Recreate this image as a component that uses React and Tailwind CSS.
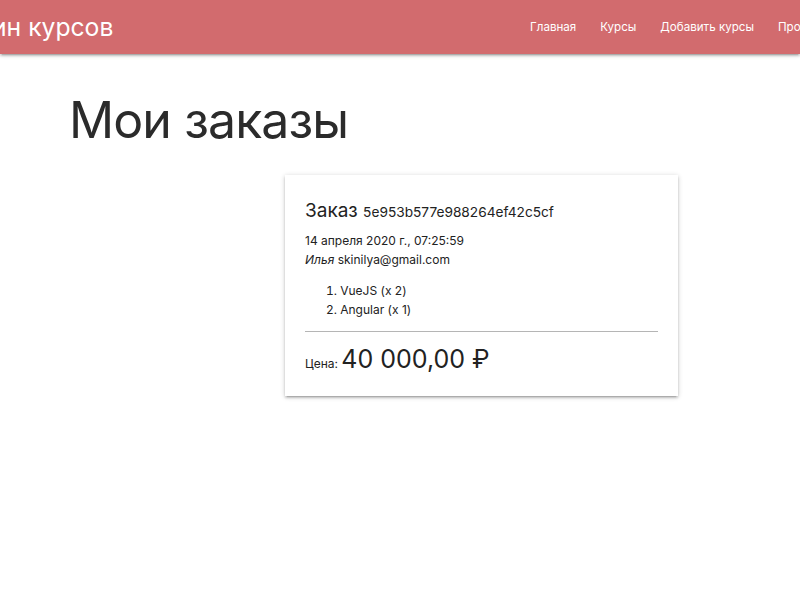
import React from 'react';

const links = ['Главная', 'Курсы', 'Добавить курсы', 'Профиль', 'Выйти'];

const order = {
  id: '5e953b577e988264ef42c5cf',
  date: '14 апреля 2020 г., 07:25:59',
  name: 'Илья',
  email: 'skinilya@gmail.com',
  courses: [
    { title: 'VueJS', count: 2 },
    { title: 'Angular', count: 1 },
  ],
  price: '40 000,00 ₽',
};

function Navbar() {
  return (
    <nav className="h-[54px] bg-[#d26b6e] text-white flex items-center overflow-hidden shadow-[0_2px_2px_0_rgba(0,0,0,0.14),0_3px_1px_-2px_rgba(0,0,0,0.12),0_1px_5px_0_rgba(0,0,0,0.2)]">
      <span className="ml-[-81px] w-[599px] shrink-0 whitespace-nowrap text-[24.7px] leading-none">
        Магазин курсов
      </span>
      <ul className="flex shrink-0 whitespace-nowrap text-[11.6px] pt-[2px]">
        {links.map((l) => (
          <li key={l} className="px-[12px]">{l}</li>
        ))}
      </ul>
    </nav>
  );
}

function OrderCard({ order }) {
  return (
    <div className="w-[393px] bg-white px-5 pt-5 pb-[24px] text-[#222] shadow-[0_2px_2px_0_rgba(0,0,0,0.14),0_3px_1px_-2px_rgba(0,0,0,0.12),0_1px_5px_0_rgba(0,0,0,0.2)]">
      <div className="leading-[32px] text-[19px]">
        Заказ <small className="text-[13.7px]">{order.id}</small>
      </div>
      <div className="mt-[3px] text-[12px] leading-[19px]">
        <p>{order.date}</p>
        <p><em>{order.name}</em> {order.email}</p>
      </div>
      <ol className="mt-[12px] pl-[21px] text-[12px] leading-[19px] list-decimal list-inside">
        {order.courses.map((c) => (
          <li key={c.title}>{c.title} (x {c.count})</li>
        ))}
      </ol>
      <hr className="mt-[12px] border-t border-[#b5b5b5]" />
      <p className="mt-[15px] leading-none">
        <span className="text-[12px]">Цена: </span>
        <span className="text-[25px]">{order.price}</span>
      </p>
    </div>
  );
}

export default function App() {
  return (
    <div className="min-h-[600px] bg-white" style={{ fontFamily: 'Inter, Roboto, sans-serif' }}>
      <Navbar />
      <main className="pl-[69px]">
        <h1 className="mt-[38px] text-[50px] leading-[57px] tracking-[-0.9px] text-[#2b2b2b]">Мои заказы</h1>
        <div className="mt-[26px] pl-[216px]">
          <OrderCard order={order} />
        </div>
      </main>
    </div>
  );
}
